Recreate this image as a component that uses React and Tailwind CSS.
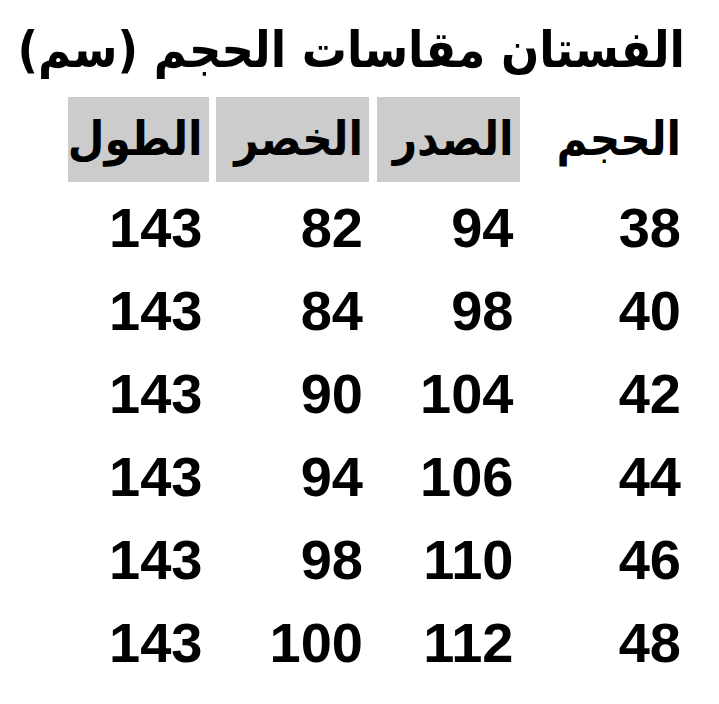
export default function App() {
  const rows = [
    ["38", "94", "82", "143"],
    ["40", "98", "84", "143"],
    ["42", "104", "90", "143"],
    ["44", "106", "94", "143"],
    ["46", "110", "98", "143"],
    ["48", "112", "100", "143"],
  ];
  const headers = [
    { t: "الحجم", bg: "bg-white" },
    { t: "الصدر", bg: "bg-[#cccccc]" },
    { t: "الخصر", bg: "bg-[#cccccc]" },
    { t: "الطول", bg: "bg-[#cccccc]" },
  ];
  return (
    <div dir="rtl" className="w-[719px] h-[704px] bg-white text-black overflow-hidden">
      <div className="pr-[34px] pt-[15px] h-[97px] text-[50px] leading-[70px] font-bold whitespace-nowrap font-['DejaVu_Sans_Condensed','DejaVu_Sans',sans-serif]">
        الفستان مقاسات الحجم (سم)
      </div>
      <div className="mr-[32px] grid grid-cols-[160px_143px_153px_141px] gap-x-[7.5px] gap-y-[8px] w-fit">
        {headers.map((h) => (
          <div
            key={h.t}
            className={`${h.bg} h-[85px] flex items-center pr-[6px] text-[47px] font-bold whitespace-nowrap font-['DejaVu_Sans_Condensed','DejaVu_Sans',sans-serif]`}
          >
            {h.t}
          </div>
        ))}
        {rows.map((r, i) =>
          r.map((v, j) => (
            <div
              key={i + "-" + j}
              className="h-[75px] flex items-center pr-[6px] text-[56px] font-bold leading-none font-['Liberation_Sans',Arial,sans-serif]"
            >
              <span dir="ltr">{v}</span>
            </div>
          ))
        )}
      </div>
    </div>
  );
}
